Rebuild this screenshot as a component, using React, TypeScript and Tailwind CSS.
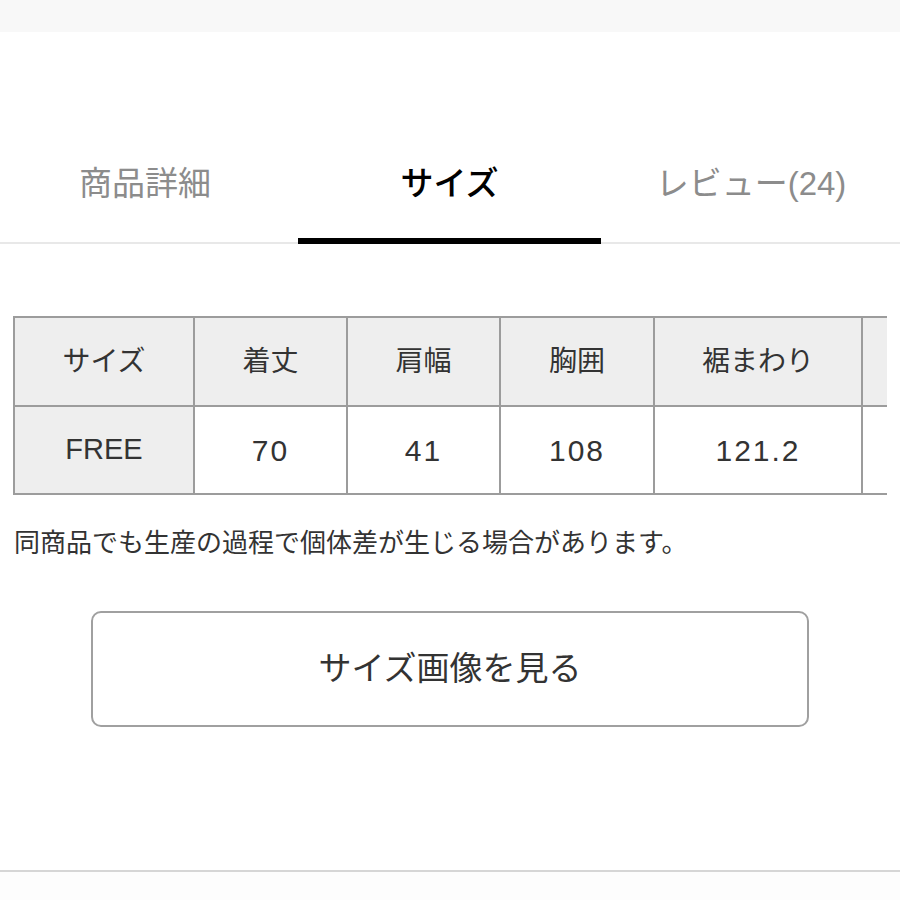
import React from "react";

const headers = ["サイズ", "着丈", "肩幅", "胸囲", "裾まわり", ""];
const values = ["FREE", "70", "41", "108", "121.2", ""];
const widths = ["w-[180px]", "w-[153px]", "w-[153px]", "w-[154px]", "w-[208px]", "w-[160px]"];

export default function App() {
  return (
    <div
      className="w-[900px] h-[900px] bg-white overflow-hidden text-[#333]"
      style={{ fontFamily: '"Liberation Sans", "Noto Sans CJK JP", sans-serif' }}
    >
      <div className="h-[32px] bg-[#f8f8f8]" />

      {/* Tabs */}
      <div className="flex border-b-2 border-[#e8e8e8]">
        <div className="w-[290px] shrink-0 pt-[135px] pb-[41px] text-center text-[33px] leading-[34px] text-[#8c8c8c]">
          商品詳細
        </div>
        <div className="relative ml-[8px] w-[303px] shrink-0 pt-[135px] pb-[41px] text-center text-[33px] leading-[34px] text-black font-medium">
          サイズ
          <span className="absolute left-0 right-0 bottom-[-2px] h-[6px] bg-black" />
        </div>
        <div className="w-[300px] shrink-0 pt-[135px] pb-[41px] text-center text-[33px] leading-[34px] text-[#8c8c8c]">
          レビュー(24)
        </div>
      </div>

      {/* Table */}
      <div className="ml-[13px] mr-[13px] mt-[72px] overflow-hidden">
        <table className="table-fixed border-collapse w-[1010px]">
          <colgroup>
            {widths.map((w, i) => (
              <col key={i} className={w} />
            ))}
          </colgroup>
          <tbody>
            <tr>
              {headers.map((h, i) => (
                <td
                  key={i}
                  className="h-[89px] border-2 border-[#9c9c9c] bg-[#eeeeee] text-center text-[28px] text-[#333]"
                >
                  {h}
                </td>
              ))}
            </tr>
            <tr>
              {values.map((v, i) => (
                <td
                  key={i}
                  className={
                    "h-[88px] border-2 border-[#9c9c9c] text-center text-[#333] " +
                    (i === 0 ? "bg-[#eeeeee] text-[29px]" : "bg-white text-[30px] tracking-[2px]")
                  }
                >
                  {v}
                </td>
              ))}
            </tr>
          </tbody>
        </table>
      </div>

      <p className="mt-[33px] pl-[14px] text-[26px] leading-[30px] text-[#333] whitespace-nowrap">
        同商品でも生産の過程で個体差が生じる場合があります。
      </p>

      <div className="flex justify-center mt-[53px]">
        <button className="w-[718px] h-[116px] border-2 border-[#a0a0a0] rounded-[10px] bg-white text-[33px] text-[#333]">
          サイズ画像を見る
        </button>
      </div>

      <div className="mt-[143px] border-t-2 border-[#d6d6d6] h-[30px] bg-[#fdfdfd]" />
    </div>
  );
}
